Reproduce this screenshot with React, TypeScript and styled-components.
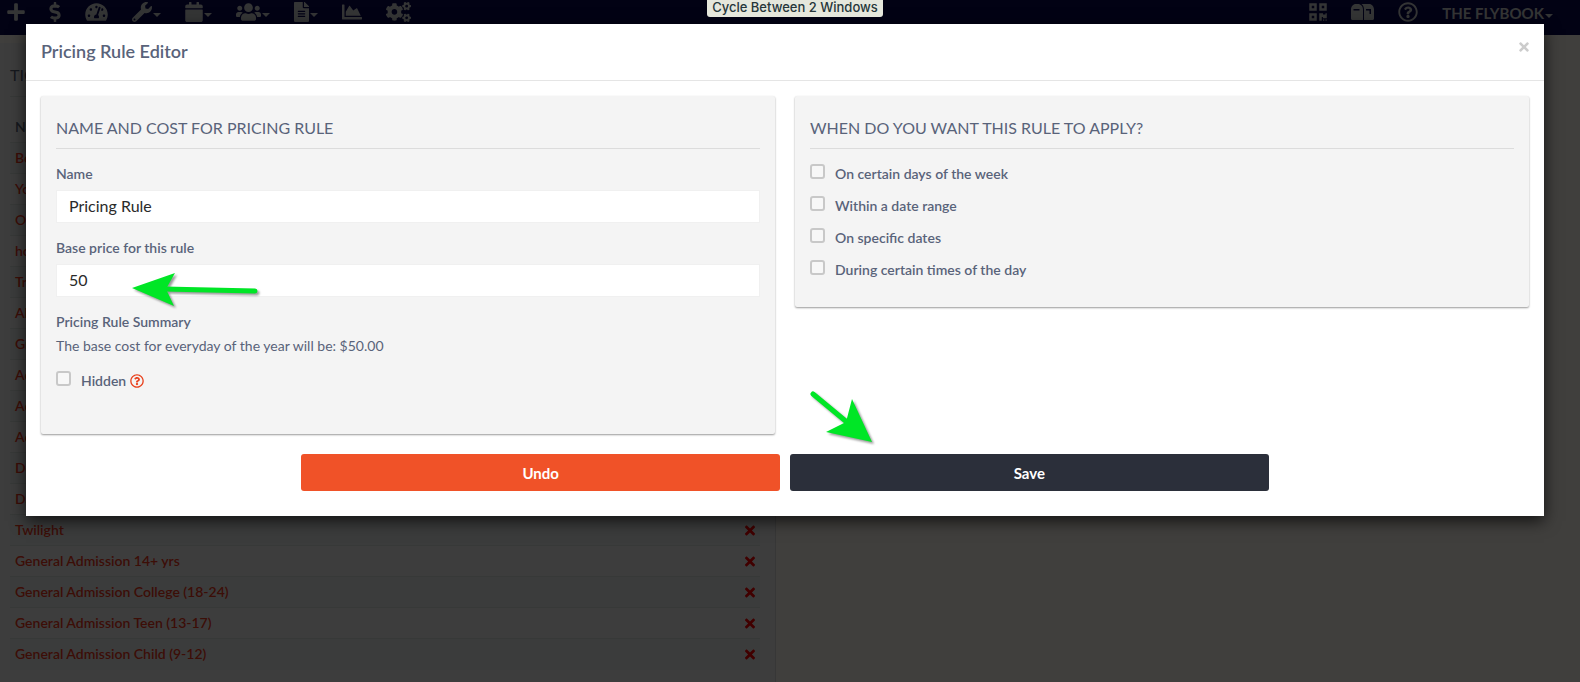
import React, { useState } from "react";
import styled, { createGlobalStyle } from "styled-components";
import {
  FaPlus,
  FaDollarSign,
  FaTachometerAlt,
  FaWrench,
  FaCalendar,
  FaUsers,
  FaFileAlt,
  FaChartArea,
  FaCogs,
  FaQrcode,
  FaRegQuestionCircle,
  FaTimes,
} from "react-icons/fa";

const font = `Lato, "Liberation Sans", sans-serif`;

const GlobalStyle = createGlobalStyle`
  *, *::before, *::after { box-sizing: border-box; }
  body {
    margin: 0;
    background: #fdfaf2;
    color: #59637a;
    font: 14px/20px ${font};
    overflow: hidden;
  }
  button, input { font-family: inherit; }
`;

const Page = styled.div`
  position: relative;
  min-height: 100vh;
  overflow: hidden;
`;

const NavBar = styled.nav`
  display: flex;
  justify-content: space-between;
  height: 35px;
  padding: 0 27px 0 7px;
  background: #0a0850;
`;

const NavGroup = styled.div`
  display: flex;
  gap: 24px;
  height: 23px;
`;

const NavButton = styled.button<{ $icon?: number }>`
  display: flex;
  align-items: center;
  gap: 1px;
  padding: 0;
  border: 0;
  background: none;
  color: #d0d4d4;
  font-size: 20px;
  white-space: nowrap;

  svg { width: ${(p) => p.$icon ?? 20}px; }
`;

const Account = styled(NavButton)`
  font-size: 15px;
  font-weight: 700;
  padding-top: 3px;
`;

const Caret = styled.span`
  margin-top: 6px;
  border: 4px solid transparent;
  border-top-color: currentColor;
  border-bottom: 0;
`;

const TicketPanel = styled.section`
  width: 49.1vw;
  min-height: calc(100vh - 43px);
  margin-top: 8px;
  padding: 20px 15px 10px 10px;
  border-right: 1px solid #dcdcdc;
  background: #f4f4f4;
`;

const TicketHeading = styled.h3`
  margin: 0 0 9px;
  height: 24px;
  font-size: 16px;
  font-weight: 400;
  line-height: 24px;
`;

const TicketTable = styled.table`
  width: 100%;
  border-collapse: collapse;
  border-top: 1px solid #dcdcdc;

  th, td {
    height: 31px;
    padding: 0 5px;
    border-top: 1px solid #dce2e0;
    text-align: left;
    font-weight: 600;
  }
  th { height: 46px; padding-top: 14px; }
  td:last-child { width: 20px; }
  tbody tr:nth-child(odd) { background: #eaf0ee; }
`;

const TicketLink = styled.a`
  color: #f0381c;
  text-decoration: none;
`;

const RemoveButton = styled.button`
  display: flex;
  padding: 0;
  border: 0;
  background: none;
  color: #ff0000;
  font-size: 15px;

  svg { width: 10px; }
`;

const Backdrop = styled.div`
  position: absolute;
  inset: 0;
  padding: 24px 36px 0 26px;
  background: rgba(0, 0, 0, 0.75);
`;

const Dialog = styled.section`
  background: #fff;
  box-shadow: 0 5px 15px rgba(0, 0, 0, 0.7);
`;

const DialogHeader = styled.header`
  display: flex;
  justify-content: space-between;
  align-items: flex-start;
  height: 57px;
  padding: 15px;
  border-bottom: 1px solid #e5e5e5;
`;

const DialogTitle = styled.h2`
  margin: 0;
  font-size: 18px;
  font-weight: 600;
  line-height: 24px;
`;

const CloseButton = styled.button`
  display: flex;
  padding: 1px 0;
  border: 0;
  background: none;
  color: #ccc;
  font-size: 14px;

  svg { width: 10px; }
`;

const DialogBody = styled.div`
  padding: 15px 15px 25px;
`;

const Columns = styled.div`
  display: grid;
  grid-template-columns: 1fr 1fr;
  align-items: start;
  gap: 20px;
`;

const Panel = styled.section<{ $bottom: number }>`
  padding: 20px 15px ${(p) => p.$bottom}px;
  background: #f4f4f4;
  border-radius: 2px;
  box-shadow: 0 1px 2px rgba(0, 0, 0, 0.4);
`;

const PanelHeading = styled.h3`
  margin: 0 0 15px;
  padding-bottom: 8px;
  border-bottom: 1px solid #dcdcdc;
  font-size: 16px;
  font-weight: 400;
  line-height: 24px;
`;

const Field = styled.div`
  position: relative;
  margin-bottom: 15px;
`;

const Label = styled.label`
  display: block;
  margin-bottom: 6px;
  font-weight: 600;
`;

const SummaryTitle = styled.h4`
  margin: 0 0 4px;
  font-size: 14px;
  font-weight: 600;
`;

const SummaryText = styled.p`
  margin: 0 0 15px;
`;

const TextInput = styled.input`
  display: block;
  width: 100%;
  height: 33px;
  padding: 0 12px 3px;
  border: 1px solid #f0f0f0;
  background: #fff;
  color: #2a2a2a;
  font-size: 16px;
`;

const CheckRow = styled.label`
  display: flex;
  align-items: center;
  height: 20px;
  font-weight: 600;

  & + & { margin-top: 12px; }
`;

const CheckBox = styled.input`
  appearance: none;
  width: 15px;
  height: 15px;
  margin: 0 10px 5px 0;
  border: 2px solid #c8c8c8;
  border-radius: 3px;
  background: #f7f7f7;

  &:checked { background: #59637a; }
`;

const HelpIcon = styled(FaRegQuestionCircle)`
  margin-left: 4px;
  color: #e8401c;
  font-size: 14px;
`;

const Actions = styled.div`
  position: relative;
  display: grid;
  grid-template-columns: 1fr 1fr;
  gap: 10px;
  width: 65%;
  margin: 20px auto 0;
`;

const ActionButton = styled.button<{ $color: string }>`
  height: 37px;
  border: 0;
  border-radius: 3px;
  background: ${(p) => p.$color};
  color: #fff;
  font-size: 15px;
  font-weight: 700;
`;

const FieldArrow = styled.svg`
  position: absolute;
  left: 70px;
  bottom: -16px;
  filter: drop-shadow(2px 2px 1px rgba(0, 0, 0, 0.4));
`;

const SaveArrow = styled.svg`
  position: absolute;
  left: calc(50% + 20px);
  bottom: 44px;
  filter: drop-shadow(2px 2px 1px rgba(0, 0, 0, 0.4));
`;

const Hint = styled.div`
  position: absolute;
  top: 0;
  left: 50%;
  width: 176px;
  margin-left: -83px;
  padding-bottom: 2px;
  border-radius: 0 0 3px 3px;
  background: #e5e7dc;
  color: #26363a;
  font: 500 13px/15px Inter, sans-serif;
  text-align: center;
  white-space: nowrap;
`;

const MailboxIcon = () => (
  <svg width="23" height="16" viewBox="0 0 23 16" fill="currentColor" aria-hidden="true">
    <path
      fillRule="evenodd"
      d="M5 0h3c3 1 4 3 4 6v10H1.500C.6 16 0 15.400 0 14.500V5.500C0 2.500 2 0 5 0zM2.500 5v1.500h6V5zM10.500 0H18c3 0 5 2.500 5 5.500v9c0 .9-.6 1.500-1.500 1.500H13V6c0-3-.9-4.900-2.500-6zM15 5v1.500h3.500V10H20V5z"
    />
  </svg>
);

const tools = [
  { label: "Add", icon: <FaPlus />, width: 18 },
  { label: "Sales", icon: <FaDollarSign />, width: 12 },
  { label: "Dashboard", icon: <FaTachometerAlt />, width: 23 },
  { label: "Setup", icon: <FaWrench />, width: 20, menu: true },
  { label: "Calendar", icon: <FaCalendar />, width: 18, menu: true },
  { label: "Customers", icon: <FaUsers />, width: 25, menu: true },
  { label: "Documents", icon: <FaFileAlt />, width: 15, menu: true },
  { label: "Reports", icon: <FaChartArea />, width: 20 },
  { label: "Settings", icon: <FaCogs />, width: 25 },
];

const tickets = [
  "Best Value",
  "Youth",
  "Open",
  "holiday",
  "Trial",
  "All Day",
  "Group",
  "Admission",
  "Adult",
  "Adult Group",
  "Double",
  "Day",
  "Twilight",
  "General Admission 14+ yrs",
  "General Admission College (18-24)",
  "General Admission Teen (13-17)",
  "General Admission Child (9-12)",
];

const conditions = [
  "On certain days of the week",
  "Within a date range",
  "On specific dates",
  "During certain times of the day",
];

export default function App() {
  const [name, setName] = useState("Pricing Rule");
  const [price, setPrice] = useState("50");

  return (
    <Page>
      <GlobalStyle />
      <NavBar>
        <NavGroup>
          {tools.map((tool) => (
            <NavButton key={tool.label} $icon={tool.width} aria-label={tool.label}>
              {tool.icon}
              {tool.menu && <Caret />}
            </NavButton>
          ))}
        </NavGroup>
        <NavGroup>
          <NavButton $icon={18} aria-label="Scan code"><FaQrcode /></NavButton>
          <NavButton $icon={23} aria-label="Mailbox"><MailboxIcon /></NavButton>
          <NavButton aria-label="Help"><FaRegQuestionCircle /></NavButton>
          <Account>THE FLYBOOK<Caret /></Account>
        </NavGroup>
      </NavBar>

      <TicketPanel>
        <TicketHeading>TICKETS</TicketHeading>
        <TicketTable>
          <thead>
            <tr><th>Name</th><th /></tr>
          </thead>
          <tbody>
            {tickets.map((ticket) => (
              <tr key={ticket}>
                <td><TicketLink href="#">{ticket}</TicketLink></td>
                <td>
                  <RemoveButton aria-label={`Remove ${ticket}`}><FaTimes /></RemoveButton>
                </td>
              </tr>
            ))}
          </tbody>
        </TicketTable>
      </TicketPanel>

      <Backdrop>
        <Dialog role="dialog" aria-labelledby="dialog-title">
          <DialogHeader>
            <DialogTitle id="dialog-title">Pricing Rule Editor</DialogTitle>
            <CloseButton aria-label="Close"><FaTimes /></CloseButton>
          </DialogHeader>
          <DialogBody>
            <Columns>
              <Panel $bottom={43}>
                <PanelHeading>NAME AND COST FOR PRICING RULE</PanelHeading>
                <Field>
                  <Label htmlFor="rule-name">Name</Label>
                  <TextInput id="rule-name" value={name} onChange={(e) => setName(e.target.value)} />
                </Field>
                <Field>
                  <Label htmlFor="rule-price">Base price for this rule</Label>
                  <TextInput id="rule-price" value={price} onChange={(e) => setPrice(e.target.value)} />
                  <FieldArrow width="140" height="48" viewBox="0 0 140 48" aria-hidden="true">
                    <path d="M6 23 49 8 40 24 48 41z" fill="#00e626" />
                    <path d="M38 24 129 26" stroke="#00e626" strokeWidth="5" strokeLinecap="round" />
                  </FieldArrow>
                </Field>
                <SummaryTitle>Pricing Rule Summary</SummaryTitle>
                <SummaryText>The base cost for everyday of the year will be: $50.00</SummaryText>
                <CheckRow>
                  <CheckBox type="checkbox" />
                  Hidden
                  <HelpIcon />
                </CheckRow>
              </Panel>
              <Panel $bottom={27}>
                <PanelHeading>WHEN DO YOU WANT THIS RULE TO APPLY?</PanelHeading>
                {conditions.map((condition) => (
                  <CheckRow key={condition}>
                    <CheckBox type="checkbox" />
                    {condition}
                  </CheckRow>
                ))}
              </Panel>
            </Columns>
            <Actions>
              <ActionButton $color="#f05228">Undo</ActionButton>
              <ActionButton $color="#2b2f3a">Save</ActionButton>
              <SaveArrow width="72" height="60" viewBox="0 0 72 60" aria-hidden="true">
                <path d="M67 55 47 12 41 35 21 45z" fill="#00e626" />
                <path d="M8 7 43 36" stroke="#00e626" strokeWidth="5" strokeLinecap="round" />
              </SaveArrow>
            </Actions>
          </DialogBody>
        </Dialog>
      </Backdrop>
      <Hint role="tooltip">Cycle Between 2 Windows</Hint>
    </Page>
  );
}
